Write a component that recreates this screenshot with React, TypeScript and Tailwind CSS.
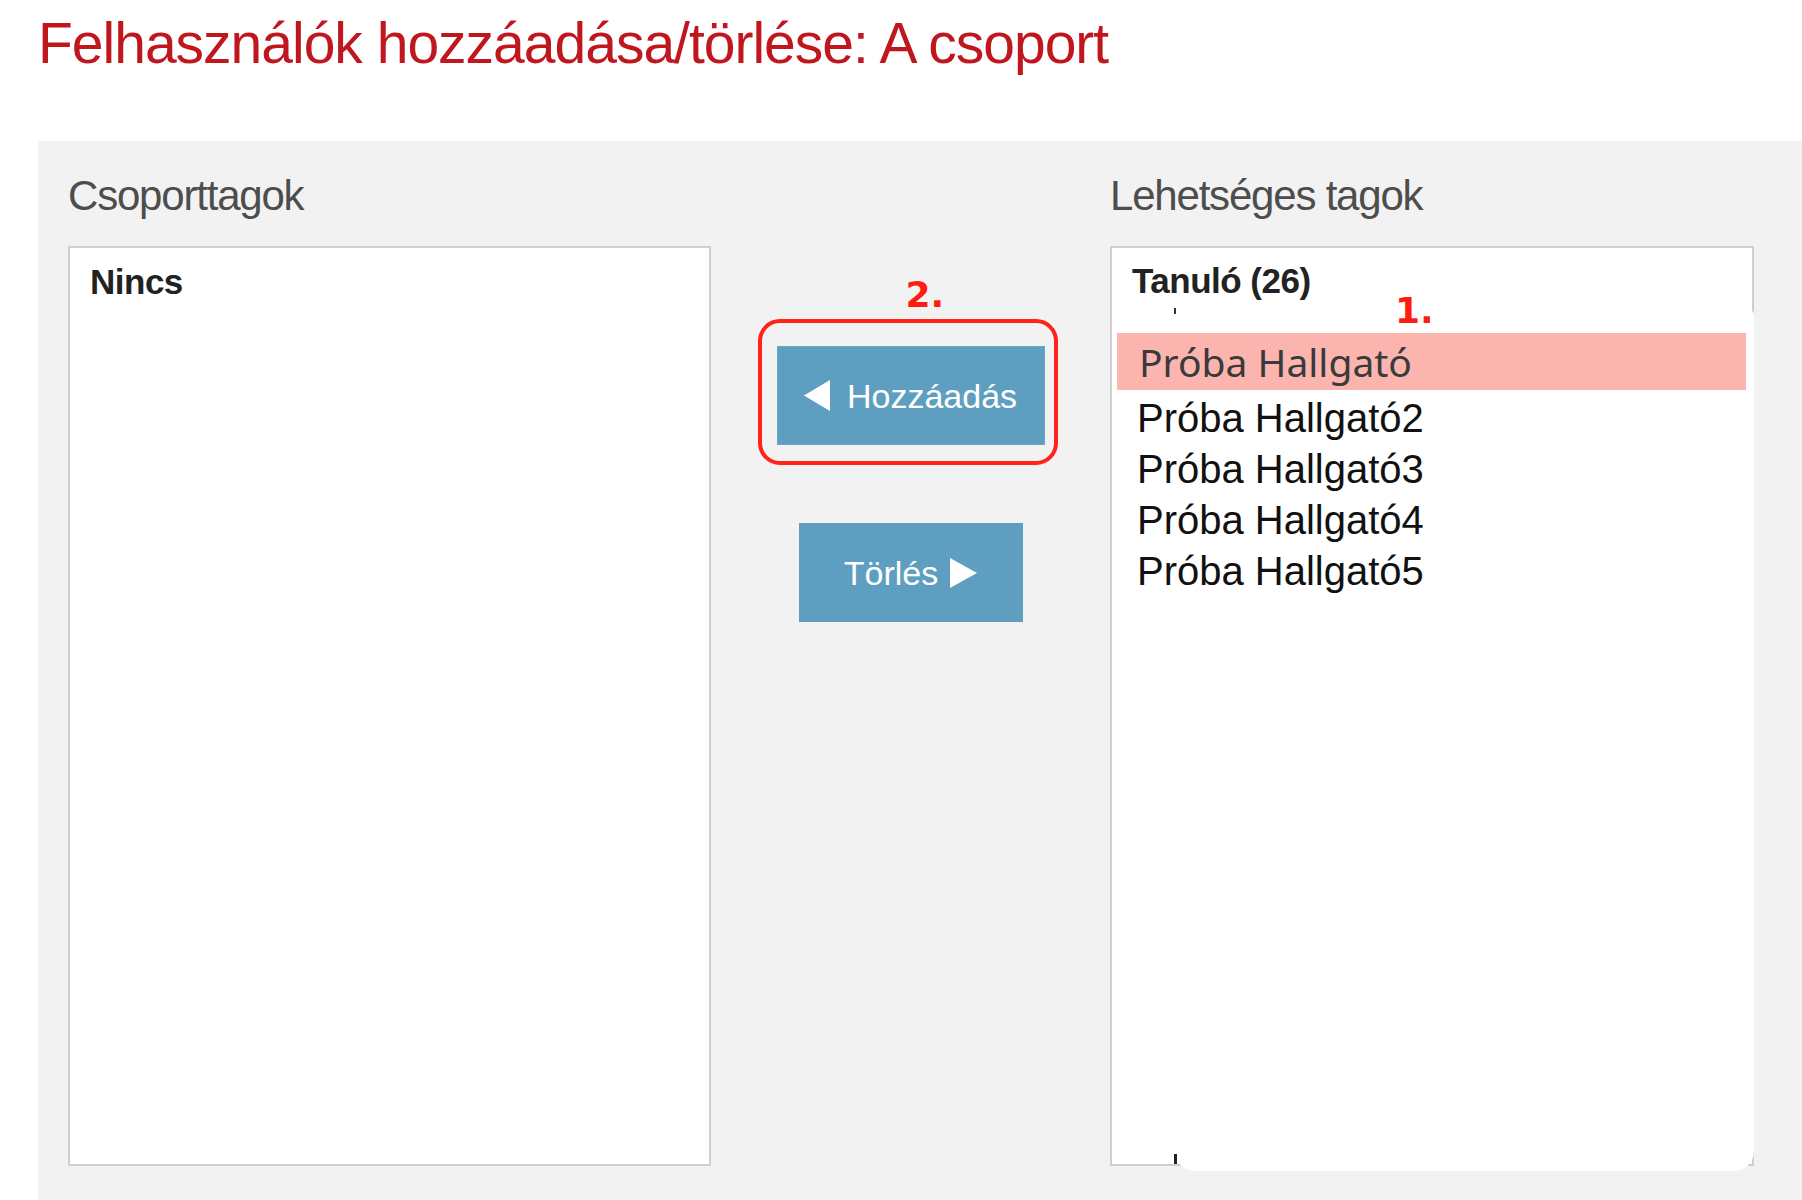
import React from "react";

const members: string[] = [];
const candidates = ["Próba Hallgató2", "Próba Hallgató3", "Próba Hallgató4", "Próba Hallgató5"];

const LeftTriangle = () => (
  <svg width="26" height="31" viewBox="0 0 26 31">
    <polygon points="26,0 26,31 0,15.5" fill="#fff" />
  </svg>
);

const RightTriangle = () => (
  <svg width="27" height="30" viewBox="0 0 27 30">
    <polygon points="0,0 27,15 0,30" fill="#fff" />
  </svg>
);

const App = () => {
  return (
    <div className="min-h-screen w-full bg-white font-['Liberation_Sans',Arial,sans-serif]">
      <h1 className="pl-[38px] pt-[15px] text-[57px] leading-[57px] tracking-[-1px] text-[#c0171e]">
        Felhasználók hozzáadása/törlése: A csoport
      </h1>

      <div className="ml-[38px] mt-[69px] flex h-[1059px] bg-[#f2f2f2] pl-[30px] pr-[48px] pt-[34px]">
        {/* Csoporttagok */}
        <div className="w-[643px]">
          <h2 className="mb-[29px] text-[42px] leading-[42px] tracking-[-1.2px] text-[#4d4d4d]">Csoporttagok</h2>
          <div className="h-[920px] border-2 border-[#cfcfcf] bg-white pl-[20px] pt-[16px]">
            {members.length === 0 && (
              <p className="text-[35px] font-bold leading-[35px] tracking-[-0.5px] text-[#222]">Nincs</p>
            )}
          </div>
        </div>

        {/* buttons */}
        <div className="flex flex-1 flex-col items-center pt-[171px]">
          <div className="relative">
            <span className="absolute left-[129px] top-[-69px] font-['DejaVu_Sans',sans-serif] text-[36px] font-bold leading-[36px] text-[#ff1d12]">
              2.
            </span>
            <div className="pointer-events-none absolute -bottom-[20px] -left-[19px] -right-[13px] -top-[27px] rounded-[22px] border-4 border-[#ff2417]" />
            <button className="flex h-[99px] w-[268px] items-center justify-center gap-[17px] border border-[#6aa8c6] bg-[#5e9fc1] text-[34px] leading-[34px] text-white">
              <LeftTriangle />
              <span>Hozzáadás</span>
            </button>
          </div>
          <button className="mt-[78px] flex h-[99px] w-[224px] items-center justify-center gap-[12px] bg-[#5e9fc1] text-[34px] leading-[34px] text-white">
            <span>Törlés</span>
            <RightTriangle />
          </button>
        </div>

        {/* Lehetséges tagok */}
        <div className="w-[644px]">
          <h2 className="mb-[29px] text-[42px] leading-[42px] tracking-[-1.2px] text-[#4d4d4d]">Lehetséges tagok</h2>
          <div className="relative h-[920px] border-2 border-[#cfcfcf] bg-white pt-[15px]">
            {/* pasted list sheet */}
            <div className="absolute left-[63px] top-[60px] h-[863px] w-[579px] rounded-b-[20px] rounded-tr-[8px] bg-white" />
            <div className="absolute left-[62px] top-[60px] h-[6px] w-[2px] bg-[#333]" />
            <div className="absolute left-[62px] top-[906px] h-[10px] w-[3px] bg-[#222]" />

            <div className="relative pl-[20px] text-[35px] font-bold leading-[35px] tracking-[-0.5px] text-[#222]">Tanuló (26)</div>
            <span className="absolute left-[283px] top-[45px] z-20 font-['DejaVu_Sans',sans-serif] text-[36px] font-bold leading-[36px] text-[#ff1d12]">
              1.
            </span>

            <ul className="relative ml-[5px] mr-[6px] mt-[35px]">
              <li className="mb-[3px] h-[57px] bg-[#fbb4ae] pl-[22px] font-['Noto_Sans',sans-serif] text-[39px] leading-[57px] text-[#3a3a3a]">
                Próba Hallgató
              </li>
              {candidates.map((name) => (
                <li key={name} className="pl-[20px] text-[40px] leading-[51px] text-[#111]">
                  {name}
                </li>
              ))}
            </ul>
          </div>
        </div>
      </div>
    </div>
  );
};

export default App;
